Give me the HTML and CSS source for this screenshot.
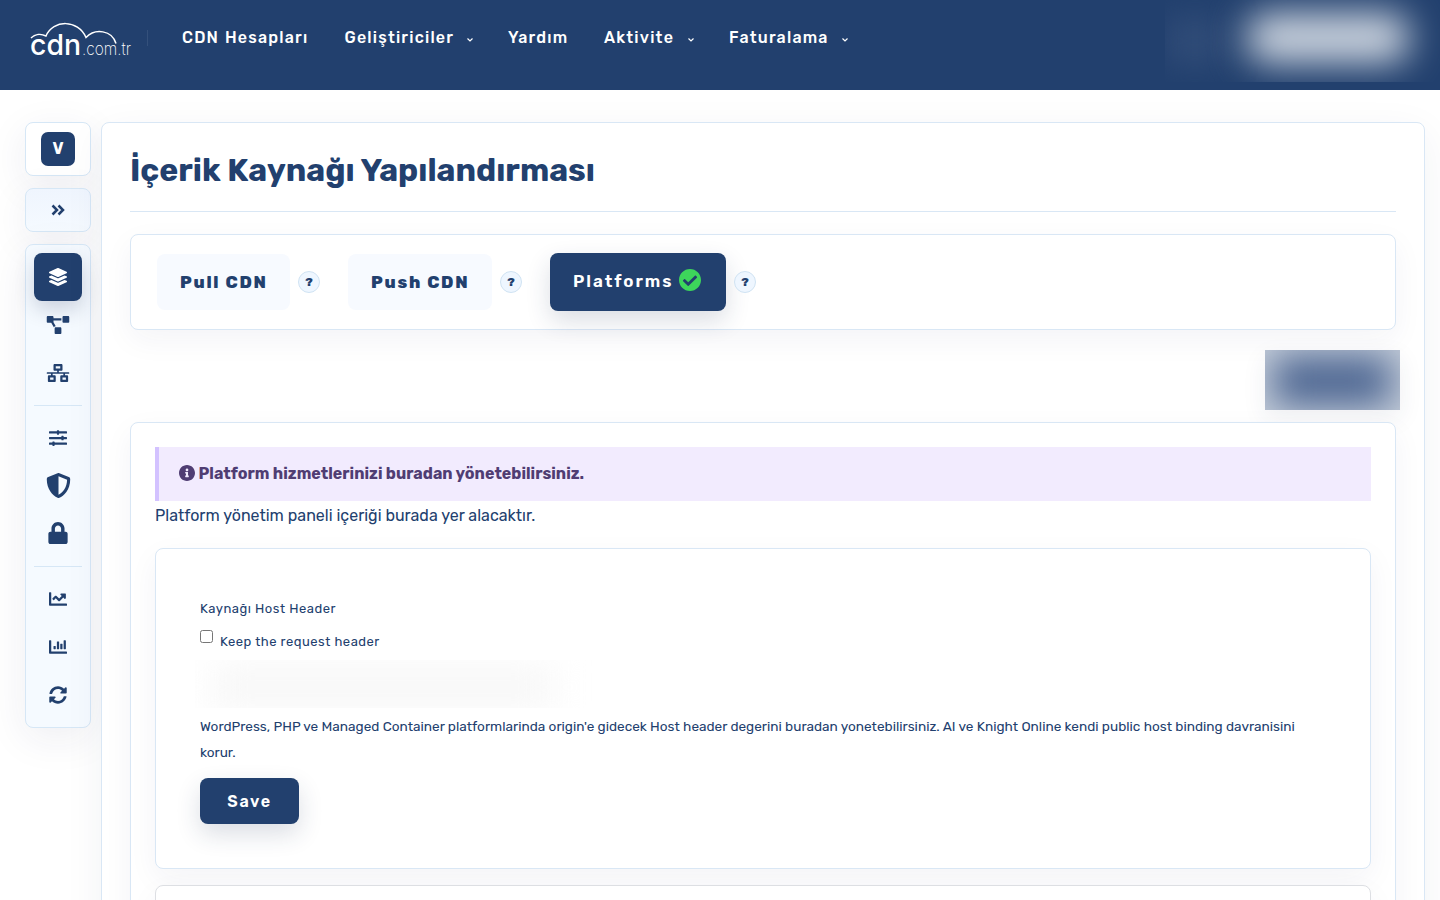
FILE: index.html
```html
<!doctype html>
<html lang="tr">
    <head>
        <title>İçerik Kaynağı Yapılandırması</title>
        <meta charset="utf-8" />
        <meta name="viewport" content="width=device-width" />
        <link rel="stylesheet" href="styles.css">
    </head>
    <body>
        <header class="topbar">
            <a class="logo" href="#">
                <svg width="102" height="38" viewBox="0 0 102 38">
                    <path class="cloud" d="M1 16C5 12 11 11.500 16 14C23 -2.500 48 -3 56 15.500C65 6 82 8 86 21.500" />
                    <text class="logo-cdn" x="0" y="33" textLength="51" lengthAdjust="spacingAndGlyphs">cdn</text>
                    <text class="logo-tld" x="52" y="33" textLength="49" lengthAdjust="spacingAndGlyphs">.com.tr</text>
                </svg>
            </a>
            <nav>
                <a class="n1" href="#">CDN Hesapları</a>
                <a class="n2" href="#">Geliştiriciler <svg class="caret" viewBox="0 0 6 4"><path d="M.5 .5L3 3L5.500 .5" /></svg></a>
                <a class="n3" href="#">Yardım</a>
                <a class="n4" href="#">Aktivite <svg class="caret" viewBox="0 0 6 4"><path d="M.5 .5L3 3L5.500 .5" /></svg></a>
                <a class="n5" href="#">Faturalama <svg class="caret" viewBox="0 0 6 4"><path d="M.5 .5L3 3L5.500 .5" /></svg></a>
            </nav>
            <div class="account"><i></i><b></b></div>
        </header>
        <div id="wrapper">
            <aside>
                <div class="badge-box"><span>V</span></div>
                <a class="toggle" href="#">
                    <svg width="14" height="12" viewBox="0 0 14 12"><path d="M1.500 1.500L6 6L1.500 10.500M7.500 1.500L12 6L7.500 10.500" /></svg>
                </a>
                <ul class="menu">
                    <li class="active"><svg width="20" height="18" viewBox="0 0 512 512"><path d="M12.410 148.020l232.940 105.670c6.800 3.090 14.490 3.090 21.290 0l232.940-105.670c16.550-7.510 16.550-32.520 0-40.030L266.650 2.310a25.607 25.607 0 0 0-21.290 0L12.410 107.980c-16.550 7.510-16.550 32.530 0 40.040zm487.180 88.280l-58.090-26.330-161.640 73.270c-7.560 3.430-15.590 5.170-23.860 5.170s-16.290-1.740-23.860-5.170L70.510 209.970l-58.100 26.330c-16.550 7.500-16.550 32.500 0 40l232.940 105.590c6.800 3.080 14.490 3.080 21.290 0L499.590 276.300c16.550-7.500 16.550-32.500 0-40zm0 127.800l-57.870-26.230-161.860 73.370c-7.560 3.430-15.590 5.170-23.860 5.170s-16.290-1.740-23.860-5.170L70.290 337.870 12.410 364.100c-16.550 7.500-16.550 32.500 0 40l232.940 105.590c6.800 3.080 14.490 3.080 21.290 0L499.590 404.100c16.550-7.500 16.550-32.500 0-40z" /></svg></li>
                    <li><svg width="24" height="18" viewBox="0 0 640 512"><path d="M384 320H256c-17.670 0-32 14.330-32 32v128c0 17.670 14.330 32 32 32h128c17.670 0 32-14.330 32-32V352c0-17.670-14.330-32-32-32zM192 32c0-17.670-14.330-32-32-32H32C14.330 0 0 14.330 0 32v128c0 17.670 14.330 32 32 32h95.720l73.160 128.040C211.980 300.980 232.400 288 256 288h.28L192 175.510V128h224V64H192V32zM608 0H480c-17.670 0-32 14.330-32 32v128c0 17.670 14.330 32 32 32h128c17.670 0 32-14.330 32-32V32c0-17.670-14.330-32-32-32z" /></svg></li>
                    <li><svg width="24" height="18" viewBox="0 0 640 512"><path d="M640 264v-16c0-8.840-7.160-16-16-16H344v-40h72c17.670 0 32-14.330 32-32V32c0-17.670-14.330-32-32-32H224c-17.670 0-32 14.330-32 32v128c0 17.670 14.330 32 32 32h72v40H16c-8.840 0-16 7.160-16 16v16c0 8.840 7.160 16 16 16h104v40H64c-17.670 0-32 14.330-32 32v128c0 17.670 14.330 32 32 32h160c17.670 0 32-14.330 32-32V352c0-17.670-14.330-32-32-32h-56v-40h304v40h-56c-17.670 0-32 14.330-32 32v128c0 17.670 14.330 32 32 32h160c17.670 0 32-14.330 32-32V352c0-17.670-14.330-32-32-32h-56v-40h104c8.840 0 16-7.160 16-16zM256 128V64h128v64H256zm-64 320H96v-64h96v64zm352 0h-96v-64h96v64z" /></svg></li>
                    <li class="divider"></li>
                    <li><svg width="18" height="18" viewBox="0 0 512 512"><path d="M496 384H160v-16c0-8.800-7.200-16-16-16h-32c-8.800 0-16 7.200-16 16v16H16c-8.800 0-16 7.200-16 16v32c0 8.800 7.200 16 16 16h80v16c0 8.800 7.200 16 16 16h32c8.800 0 16-7.200 16-16v-16h336c8.800 0 16-7.200 16-16v-32c0-8.800-7.200-16-16-16zm0-160h-80v-16c0-8.800-7.200-16-16-16h-32c-8.800 0-16 7.200-16 16v16H16c-8.800 0-16 7.200-16 16v32c0 8.800 7.200 16 16 16h336v16c0 8.800 7.200 16 16 16h32c8.800 0 16-7.200 16-16v-16h80c8.800 0 16-7.200 16-16v-32c0-8.800-7.200-16-16-16zm0-160H288V48c0-8.800-7.200-16-16-16h-32c-8.800 0-16 7.200-16 16v16H16C7.200 64 0 71.200 0 80v32c0 8.800 7.200 16 16 16h208v16c0 8.800 7.200 16 16 16h32c8.800 0 16-7.200 16-16v-16h208c8.800 0 16-7.200 16-16V80c0-8.800-7.200-16-16-16z" /></svg></li>
                    <li class="big"><svg width="25" height="25" viewBox="0 0 512 512"><path d="M466.500 83.700l-192-80a48.150 48.150 0 0 0-36.900 0l-192 80C27.700 91.100 16 108.600 16 128c0 198.500 114.500 335.700 221.500 380.300 11.800 4.900 25.100 4.900 36.900 0C360.100 472.600 496 349.300 496 128c0-19.400-11.700-36.900-29.500-44.300zM256.100 446.300l-.1-381 175.900 73.300c-3.300 151.400-82.100 261.100-175.800 307.700z" /></svg></li>
                    <li class="big"><svg width="20" height="22" viewBox="0 0 448 512"><path d="M400 224h-24v-72C376 68.200 307.800 0 224 0S72 68.200 72 152v72H48c-26.500 0-48 21.500-48 48v192c0 26.500 21.500 48 48 48h352c26.500 0 48-21.500 48-48V272c0-26.500-21.500-48-48-48zm-104 0H152v-72c0-39.700 32.300-72 72-72s72 32.300 72 72v72z" /></svg></li>
                    <li class="divider"></li>
                    <li><svg width="18" height="18" viewBox="0 0 512 512"><path d="M496 384H64V80c0-8.840-7.160-16-16-16H16C7.160 64 0 71.160 0 80v336c0 17.670 14.330 32 32 32h464c8.840 0 16-7.160 16-16v-32c0-8.840-7.160-16-16-16zM464 96H345.940c-21.380 0-32.090 25.850-16.970 40.970l32.400 32.400L288 242.750l-73.370-73.370c-12.500-12.500-32.760-12.500-45.250 0l-68.690 68.690c-6.250 6.250-6.250 16.380 0 22.630l22.620 22.620c6.250 6.250 16.380 6.250 22.630 0L192 237.250l73.370 73.370c12.500 12.500 32.760 12.500 45.250 0l96-96 32.400 32.400c15.120 15.120 40.970 4.410 40.970-16.970V112c.010-8.840-7.150-16-15.990-16z" /></svg></li>
                    <li><svg width="18" height="18" viewBox="0 0 512 512"><path d="M496 384H64V80c0-9-7-16-16-16H16C7 64 0 71 0 80v336c0 18 14 32 32 32h464c9 0 16-7 16-16v-32c0-9-7-16-16-16z" /><rect x="128" y="224" width="64" height="96" rx="13" /><rect x="224" y="96" width="64" height="224" rx="13" /><rect x="320" y="160" width="64" height="160" rx="13" /><rect x="416" y="64" width="64" height="256" rx="13" /></svg></li>
                    <li><svg width="18" height="18" viewBox="0 0 512 512"><path d="M370.720 133.280C339.458 104.008 298.888 87.962 255.848 88c-77.458.068-144.328 53.178-162.791 126.850-1.344 5.363-6.122 9.150-11.651 9.150H24.103c-7.498 0-13.194-6.807-11.807-14.176C33.933 94.924 134.813 8 256 8c66.448 0 126.791 26.136 171.315 68.685L463.030 40.970C478.149 25.851 504 36.559 504 57.941V192c0 13.255-10.745 24-24 24H345.941c-21.382 0-32.090-25.851-16.971-40.971l41.750-41.749zM32 296h134.059c21.382 0 32.090 25.851 16.971 40.971l-41.750 41.750c31.262 29.273 71.835 45.319 114.876 45.280 77.418-.070 144.315-53.144 162.787-126.849 1.344-5.363 6.122-9.150 11.651-9.150h57.304c7.498 0 13.194 6.807 11.807 14.176C478.067 417.076 377.187 504 256 504c-66.448 0-126.791-26.136-171.315-68.685L48.970 471.030C33.851 486.149 8 475.441 8 454.059V320c0-13.255 10.745-24 24-24z" /></svg></li>
                </ul>
            </aside>
            <main class="card">
                <h1>İçerik Kaynağı Yapılandırması</h1>
                <div class="card tabs">
                    <a class="tab pull" href="#">Pull CDN</a><span class="help">?</span>
                    <a class="tab push" href="#">Push CDN</a><span class="help">?</span>
                    <a class="tab active" href="#">Platforms <svg width="22" height="22" viewBox="8 8 496 496"><path d="M504 256c0 136.967-111.033 248-248 248S8 392.967 8 256 119.033 8 256 8s248 111.033 248 248zM227.314 387.314l184-184c6.248-6.248 6.248-16.379 0-22.627l-22.627-22.627c-6.248-6.249-16.379-6.249-22.628 0L216 308.118l-70.059-70.059c-6.248-6.248-16.379-6.248-22.628 0l-22.627 22.627c-6.248 6.248-6.248 16.379 0 22.627l104 104c6.249 6.249 16.379 6.249 22.628.001z" /></svg></a><span class="help">?</span>
                </div>
                <div class="action"><i></i></div>
                <section class="card panel">
                    <div class="notice">
                        <svg width="16" height="16" viewBox="8 8 496 496"><path d="M256 8C119.043 8 8 119.083 8 256c0 136.997 111.043 248 248 248s248-111.003 248-248C504 119.083 392.957 8 256 8zm0 110c23.196 0 42 18.804 42 42s-18.804 42-42 42-42-18.804-42-42 18.804-42 42-42zm56 254c0 6.627-5.373 12-12 12h-88c-6.627 0-12-5.373-12-12v-24c0-6.627 5.373-12 12-12h12v-64h-12c-6.627 0-12-5.373-12-12v-24c0-6.627 5.373-12 12-12h64c6.627 0 12 5.373 12 12v100h12c6.627 0 12 5.373 12 12v24z" /></svg>
                        <strong>Platform hizmetlerinizi buradan yönetebilirsiniz.</strong>
                    </div>
                    <p class="intro">Platform yönetim paneli içeriği burada yer alacaktır.</p>
                    <form class="card" onsubmit="return false">
                        <p class="field-name">Kaynağı Host Header</p>
                        <label class="check"><input type="checkbox" /><span>Keep the request header</span></label>
                        <div class="host"><i></i></div>
                        <p class="hint">WordPress, PHP ve Managed Container platformlarinda origin'e gidecek Host header degerini buradan yonetebilirsiniz. AI ve Knight Online kendi public host binding davranisini korur.</p>
                        <button>Save</button>
                    </form>
                    <div class="card next"></div>
                </section>
            </main>
        </div>
    </body>
</html>
```
FILE: styles.css
```css
* {
    box-sizing: border-box;
}

body {
    font-family: Rubik, Roboto, "Open Sans", sans-serif;
    font-size: 16px;
    color: #22406e;
    margin: 0px;
    height: 900px;
    overflow: hidden;
    background-color: white;
}

a {
    color: inherit;
    text-decoration: none;
}

.topbar {
    height: 90px;
    background-color: #22406e;
    color: white;
    display: flex;
    align-items: flex-start;
}

.logo {
    margin: 22px 0 0 30px;
    height: 38px;
}

.logo svg {
    overflow: visible;
}

.cloud {
    fill: none;
    stroke: white;
    stroke-width: 1.5;
}

.logo text {
    fill: white;
    font-family: Inter, sans-serif;
}

.logo-cdn {
    font-size: 29px;
    font-weight: 500;
}

.logo .logo-tld {
    font-size: 17px;
    font-weight: 200;
}

nav {
    margin: 30px 0 0 15px;
    border-left: 1px solid #34507b;
    height: 16px;
    padding-left: 34px;
    display: flex;
    font-weight: 500;
    line-height: 16px;
    letter-spacing: 1.2px;
    white-space: nowrap;
}

nav a {
    display: flex;
    justify-content: space-between;
}

.n1 {
    width: 162.5px;
    word-spacing: 1px;
}

.n2 {
    width: 128.5px;
    margin-right: 35px;
}

.n3 {
    width: 96px;
}

.n4 {
    width: 90px;
    margin-right: 35px;
}

.n5 {
    width: 119px;
}

.caret {
    width: 6px;
    height: 4px;
    margin-top: 8px;
    fill: none;
    stroke: white;
    stroke-width: 1.2;
}

.account {
    margin-left: auto;
    width: 275px;
    height: 82px;
    overflow: hidden;
    display: flex;
    align-items: center;
}

.account i {
    width: 60px;
    height: 50px;
    background-color: #2f4b77;
    filter: blur(15px);
}

.account b {
    width: 162px;
    height: 50px;
    margin: -6px 0 0 22px;
    border-radius: 20px;
    background-color: #ccd4df;
    filter: blur(18px);
}

#wrapper {
    display: flex;
    align-items: flex-start;
    gap: 10px;
    padding: 32px 15px 0 25px;
}

aside {
    width: 66px;
    display: grid;
    gap: 12px;
}

.badge-box, .toggle, .menu {
    border: 1px solid #d6e7f6;
    border-radius: 8px;
    box-shadow: 0 10px 40px rgba(34, 34, 90, 0.08);
    background-color: #f5faff;
}

.badge-box, .toggle {
    height: 54px;
    display: flex;
    align-items: center;
    justify-content: center;
}

.badge-box {
    background-color: white;
}

.badge-box span {
    width: 34px;
    height: 34px;
    border-radius: 7px;
    background-color: #22406e;
    color: white;
    text-align: center;
    font-weight: 700;
    line-height: 33px;
}

.toggle {
    height: 44px;
    background: linear-gradient(#eff5fe, #f5faff);
}

.toggle svg {
    fill: none;
    stroke: #22406e;
    stroke-width: 2.5;
}

.menu {
    list-style: none;
    margin: 0px;
    padding: 8px;
}

.menu li {
    height: 48px;
    display: flex;
    align-items: center;
    justify-content: center;
    fill: #22406e;
}

.menu .big {
    padding-bottom: 2px;
}

.menu .active {
    background-color: #22406e;
    fill: white;
    border-radius: 8px;
    box-shadow: 0 8px 20px rgba(34, 48, 90, 0.2);
}

.menu .divider {
    height: 1px;
    margin: 8px 0;
    background-color: #d6e7f6;
}

.card {
    border: 1px solid #d9e7f5;
    border-radius: 8px;
    background-color: white;
    box-shadow: 0 10px 30px rgba(34, 48, 90, 0.05);
}

main {
    width: 1324px;
    height: 1200px;
    padding: 0 28px;
}

main.card {
    box-shadow: 0 10px 40px rgba(34, 48, 90, 0.06);
}

h1 {
    margin: 0 0 22px;
    height: 89px;
    border-bottom: 1px solid #d9e7f5;
    font-size: 32px;
    font-weight: 700;
    line-height: 94px;
    white-space: nowrap;
}

.tabs {
    height: 96px;
    padding-left: 26px;
    display: flex;
    align-items: center;
}

.tab {
    height: 56px;
    border-radius: 8px;
    background-color: #f7faff;
    font-size: 17px;
    font-weight: 800;
    letter-spacing: 1.75px;
    display: flex;
    align-items: center;
    padding-left: 23px;
    white-space: nowrap;
}

.pull {
    width: 133px;
}

.push {
    width: 144px;
}

.tab.active {
    width: 176px;
    height: 58px;
    padding-bottom: 2px;
    background-color: #22406e;
    color: white;
    font-weight: 600;
    letter-spacing: 1.95px;
    justify-content: space-between;
    padding-right: 25px;
    box-shadow: 0 10px 24px rgba(34, 48, 90, 0.16);
}

.tab svg {
    fill: #3dd65b;
    margin-bottom: 2px;
}

.help {
    width: 22px;
    height: 22px;
    margin: 0 28px 0 8px;
    border: 1px solid #d0e3f3;
    border-radius: 50%;
    background-color: #eef6ff;
    font-size: 12px;
    font-weight: 800;
    line-height: 20px;
    text-align: center;
}

.action {
    width: 135px;
    height: 60px;
    margin: 20px -4px 12px auto;
    overflow: hidden;
    background-color: #c3ccd9;
    box-shadow: 0 8px 24px rgba(34, 48, 90, 0.08);
    padding: 6px 8px;
}

.action i {
    display: block;
    height: 50px;
    border-radius: 12px;
    background-color: #4c6591;
    filter: blur(18px);
}

.panel {
    height: 700px;
    padding: 24px;
}

.notice {
    height: 54px;
    border-left: 4px solid #d3c2ff;
    background-color: #f2ebfe;
    color: #503d73;
    padding-left: 20px;
    display: flex;
    align-items: center;
    gap: 3.5px;
    white-space: nowrap;
}

.notice svg {
    fill: #503d73;
    margin-bottom: 2px;
}

.notice strong {
    font-weight: 700;
    margin-bottom: 2px;
}

.intro {
    margin: 0 0 17px;
    line-height: 30px;
}

form {
    height: 321px;
    padding: 44px;
}

.field-name, .check {
    margin: 0px;
    font-size: 13px;
    letter-spacing: 0.5px;
    line-height: 32px;
}

.check {
    display: flex;
    align-items: flex-start;
    height: 35px;
}

.check input {
    margin: 5px 7px 0 0;
}

.check span {
    line-height: 34px;
}

.host {
    width: 400px;
    height: 48px;
    margin: 0 0 5px -5px;
    overflow: hidden;
    padding: 6px 40px 6px 16px;
}

.host i {
    display: block;
    height: 42px;
    background-color: #f7f7f7;
    filter: blur(18px);
}

.hint {
    margin: 0 0 13px;
    font-size: 13.6px;
    line-height: 26px;
}

form button {
    width: 99px;
    height: 46px;
    border: none;
    border-radius: 8px;
    background-color: #22406e;
    color: white;
    font: inherit;
    font-weight: 600;
    letter-spacing: 1.6px;
    box-shadow: 0 10px 24px rgba(34, 48, 90, 0.16);
}

.next {
    margin-top: 16px;
    height: 200px;
    border-color: #dddfe3;
}
```
